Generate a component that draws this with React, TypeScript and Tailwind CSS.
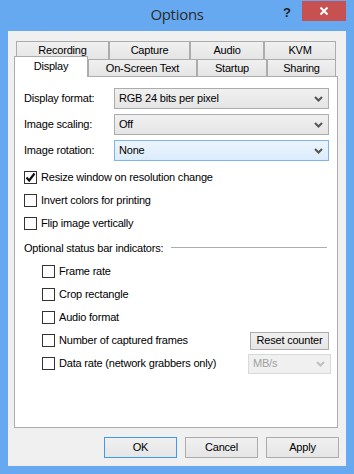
import React from "react";

const ui = "font-['Liberation_Sans',Arial,sans-serif] text-[11px] tracking-[-0.2px] text-black";

const Chevron = ({ color = "#555" }: { color?: string }) => (
  <svg width="9" height="6" viewBox="0 0 9 6" className="shrink-0">
    <polyline points="1,1 4.5,4.5 8,1" fill="none" stroke={color} strokeWidth="2" />
  </svg>
);

const Checkbox = ({ label, checked = false, indent = false }: { label: string; checked?: boolean; indent?: boolean }) => (
  <div className={`flex items-center h-[23px] ${indent ? "ml-[18px]" : ""}`}>
    <div className="w-[13px] h-[13px] border border-[#333] bg-white flex items-center justify-center shrink-0">
      {checked && (
        <svg width="11" height="11" viewBox="0 0 11 11">
          <path d="M1.5 5.5 L4.2 8.5 L9.5 1.5" fill="none" stroke="#111" strokeWidth="2.2" />
        </svg>
      )}
    </div>
    <span className="ml-[4px]">{label}</span>
  </div>
);

const SelectRow = ({ label, value, focused = false }: { label: string; value: string; focused?: boolean }) => (
  <div className="flex items-center h-[21px]">
    <span className="w-[90px] shrink-0">{label}</span>
    <div
      className={`w-[215px] h-[21px] flex items-center justify-between pl-[4px] pr-[5px] border ${
        focused
          ? "border-[#7eb4ea] bg-gradient-to-b from-[#ecf4fc] to-[#dcecfc]"
          : "border-[#acacac] bg-gradient-to-b from-[#f0f0f0] to-[#e5e5e5]"
      }`}
    >
      <span>{value}</span>
      <Chevron />
    </div>
  </div>
);

const Tab = ({ label, w }: { label: string; w: string }) => (
  <div
    className={`${w} h-full flex items-center justify-center border-t border-l border-r border-[#acacac] bg-gradient-to-b from-[#f0f0f0] to-[#e5e5e5]`}
  >
    {label}
  </div>
);

const Button = ({ label, def = false, w = "w-[73px]", h = "h-[21px]" }: { label: string; def?: boolean; w?: string; h?: string }) => (
  <div
    className={`${w} ${h} flex items-center justify-center border bg-gradient-to-b from-[#f0f0f0] to-[#e5e5e5] ${
      def ? "border-[#3d9bee]" : "border-[#acacac]"
    }`}
  >
    {label}
  </div>
);

export default function App() {
  return (
    <div className="w-[354px] h-[474px] bg-[#66a9f0] flex flex-col">
      {/* title bar */}
      <div className="h-[31px] shrink-0 grid grid-cols-[1fr_auto_1fr]">
        <div />
        <div className="pt-[3px] font-['Open_Sans',sans-serif] text-[15px] tracking-[-0.3px] text-[#2b2b2b]">Options</div>
        <div className="flex justify-end items-start pr-[8px] pt-[1px]">
          <span className="mt-[2px] mr-[11px] font-['Liberation_Sans',Arial,sans-serif] font-bold text-[13px] text-[#222]">?</span>
          <div className="w-[44px] h-[20px] bg-[#c75050] flex items-center justify-center">
            <svg width="10" height="10" viewBox="0 0 10 10">
              <path d="M1.5 1.5 L8.5 8.5 M8.5 1.5 L1.5 8.5" stroke="white" strokeWidth="2" />
            </svg>
          </div>
        </div>
      </div>

      {/* client */}
      <div className={`flex-1 mx-[8px] mb-[8px] bg-[#f0f0f0] flex flex-col pt-[10px] pl-[6px] pr-[8px] ${ui}`}>
        <div className="flex h-[18px] ml-[2px]">
          <Tab label="Recording" w="w-[93px]" />
          <Tab label="Capture" w="w-[81px]" />
          <Tab label="Audio" w="w-[74px]" />
          <Tab label="KVM" w="w-[72px]" />
        </div>
        <div className="flex h-[17px]">
          <div className="relative z-10 -mt-[3px] w-[74px] h-[21px] flex items-center justify-center pb-[2px] bg-white border-t border-l border-r border-[#acacac]">
            Display
          </div>
          <Tab label="On-Screen Text" w="w-[109px]" />
          <Tab label="Startup" w="w-[70px]" />
          <Tab label="Sharing" w="w-[69px]" />
        </div>

        {/* pane */}
        <div className="h-[352px] bg-white border border-[#adadad] flex flex-col pt-[11px] pl-[9px] pr-[8px]">
          <div className="flex flex-col gap-[5px]">
            <SelectRow label="Display format:" value="RGB 24 bits per pixel" />
            <SelectRow label="Image scaling:" value="Off" />
            <SelectRow label="Image rotation:" value="None" focused />
          </div>
          <div className="mt-[5px]">
            <Checkbox label="Resize window on resolution change" checked />
            <Checkbox label="Invert colors for printing" />
            <Checkbox label="Flip image vertically" />
          </div>
          <div className="mt-[2px] h-[23px] flex items-center">
            <span>Optional status bar indicators:</span>
            <div className="flex-1 h-px bg-[#adadad] ml-[8px] mr-[2px] -mt-[2px]" />
          </div>
          <Checkbox label="Frame rate" indent />
          <Checkbox label="Crop rectangle" indent />
          <Checkbox label="Audio format" indent />
          <div className="flex items-center justify-between">
            <Checkbox label="Number of captured frames" indent />
            <Button label="Reset counter" w="w-[79px]" h="h-[18px]" />
          </div>
          <div className="flex items-center justify-between">
            <Checkbox label="Data rate (network grabbers only)" indent />
            <div className="-mr-[2px] w-[83px] h-[20px] flex items-center justify-between pl-[4px] pr-[5px] border border-[#d9d9d9] bg-[#f0f0f0] text-[#a0a0a0]">
              <span>MB/s</span>
              <Chevron color="#c0c0c0" />
            </div>
          </div>
        </div>

        <div className="mt-[9px] flex justify-end gap-[8px] -mr-[1px]">
          <Button label="OK" def />
          <Button label="Cancel" />
          <Button label="Apply" />
        </div>
      </div>
    </div>
  );
}
